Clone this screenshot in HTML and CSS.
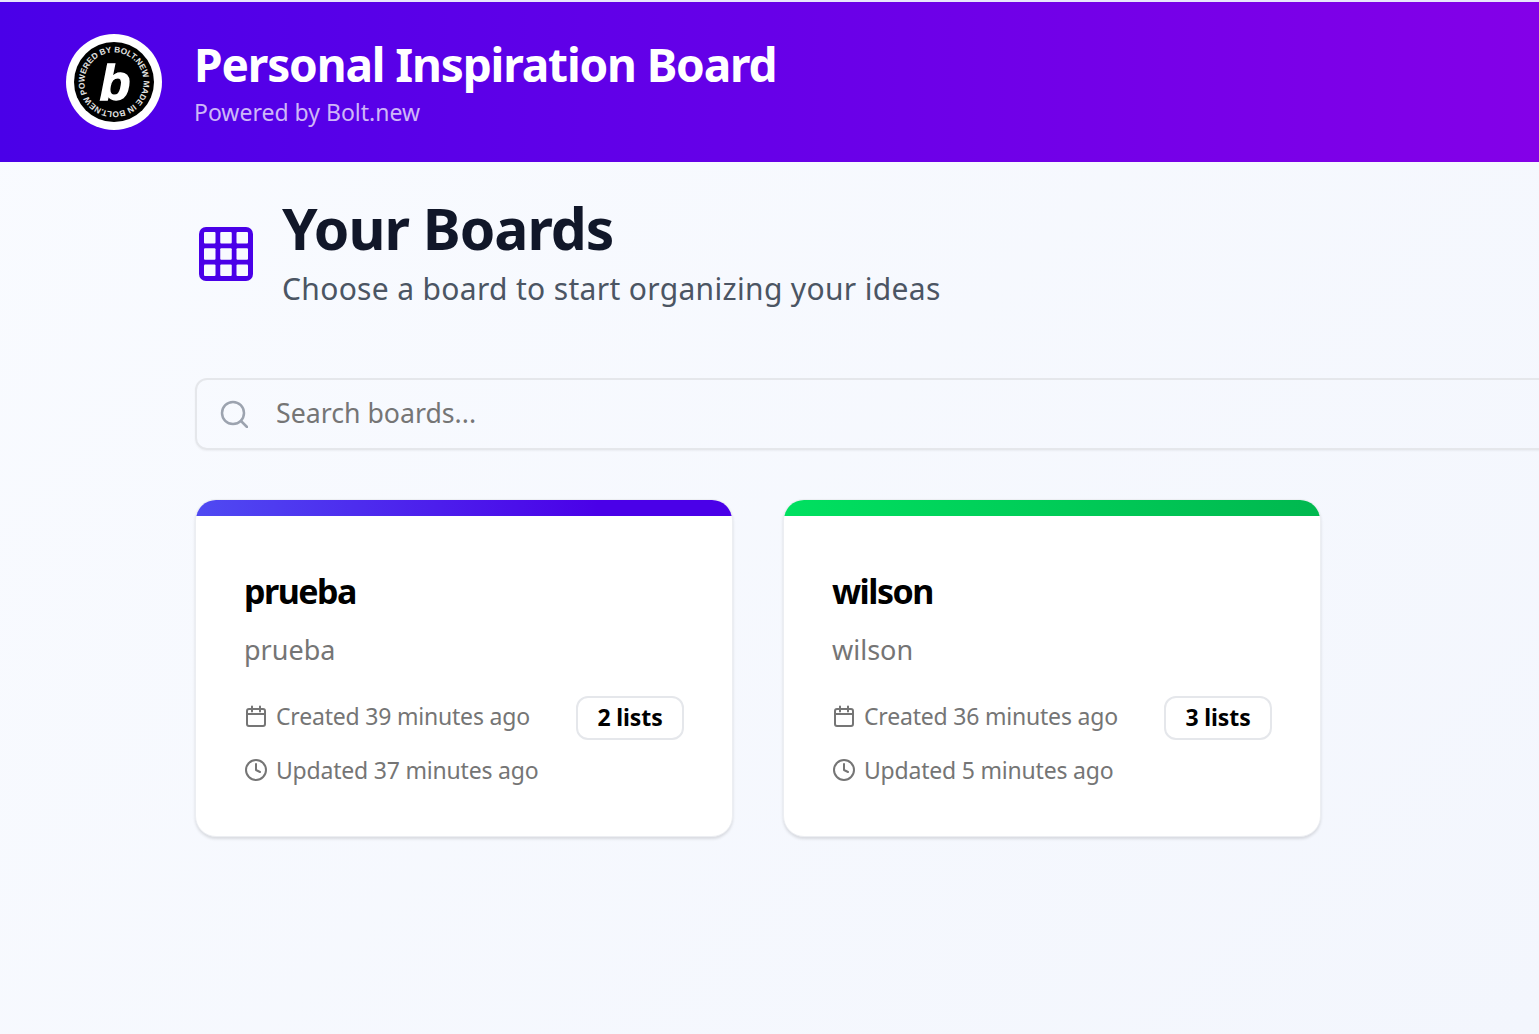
FILE: index.html
```html
<!DOCTYPE html>
<html lang="en">
<head>
<meta charset="utf-8">
<title>Personal Inspiration Board</title>
<link rel="stylesheet" href="styles.css">
</head>
<body>
<header class="topbar">
  <svg class="logo" viewBox="0 0 96 96" width="96" height="96" aria-hidden="true">
    <circle cx="48" cy="48" r="48" fill="#fff"></circle>
    <circle cx="48" cy="48" r="40" fill="#000"></circle>
    <defs><path id="ring" d="M18.500 48a29.500 29.500 0 1 1 59 0a29.500 29.500 0 1 1 -59 0"></path></defs>
    <text class="logo-ring" transform="rotate(-24 48 48)"><textPath href="#ring" textLength="183" lengthAdjust="spacing">POWERED BY BOLT.NEW MADE IN BOLT.NEW</textPath></text>
    <text class="logo-b" x="49" y="66" text-anchor="middle">b</text>
  </svg>
  <div class="brand">
    <h1 class="brand-title">Personal Inspiration Board</h1>
    <p class="brand-sub">Powered by Bolt.new</p>
  </div>
</header>
<main class="content">
  <section class="heading">
    <svg class="grid-icon" viewBox="0 0 54 54" width="54" height="54" aria-hidden="true">
      <rect class="grid-frame" x="0" y="0" width="54" height="54" rx="7"></rect>
      <rect class="grid-cell" x="5" y="5" width="11.500" height="11.500" rx="1"></rect>
      <rect class="grid-cell" x="21.250" y="5" width="11.500" height="11.500" rx="1"></rect>
      <rect class="grid-cell" x="37.500" y="5" width="11.500" height="11.500" rx="1"></rect>
      <rect class="grid-cell" x="5" y="21.250" width="11.500" height="11.500" rx="1"></rect>
      <rect class="grid-cell" x="21.250" y="21.250" width="11.500" height="11.500" rx="1"></rect>
      <rect class="grid-cell" x="37.500" y="21.250" width="11.500" height="11.500" rx="1"></rect>
      <rect class="grid-cell" x="5" y="37.500" width="11.500" height="11.500" rx="1"></rect>
      <rect class="grid-cell" x="21.250" y="37.500" width="11.500" height="11.500" rx="1"></rect>
      <rect class="grid-cell" x="37.500" y="37.500" width="11.500" height="11.500" rx="1"></rect>
    </svg>
    <div>
      <h2 class="heading-title">Your Boards</h2>
      <p class="heading-sub">Choose a board to start organizing your ideas</p>
    </div>
  </section>
  <div class="search">
    <svg class="search-icon" viewBox="0 0 28 28" width="28" height="28" aria-hidden="true">
      <circle cx="13" cy="13" r="11" fill="none" stroke="#9ca3af" stroke-width="2.500"></circle>
      <path d="M21 21l6 6" fill="none" stroke="#9ca3af" stroke-width="2.500" stroke-linecap="round"></path>
    </svg>
    <span class="search-text">Search boards...</span>
  </div>
  <div class="cards">
    <article class="card">
      <div class="card-bar bar-blue"></div>
      <div class="card-body">
        <h3 class="card-title">prueba</h3>
        <p class="card-desc">prueba</p>
        <div class="meta-row">
          <div class="meta meta-first">
            <svg class="meta-icon" viewBox="0 0 24 24" width="24" height="24" aria-hidden="true"><rect x="3" y="5" width="18" height="17" rx="2"></rect><path d="M16 2.500v5M8 2.500v5M3 10h18"></path></svg>
            <span>Created 39 minutes ago</span>
          </div>
          <span class="badge">2 lists</span>
        </div>
        <div class="meta meta-last">
          <svg class="meta-icon" viewBox="0 0 24 24" width="24" height="24" aria-hidden="true"><circle cx="12" cy="12" r="10"></circle><path d="M12 6v6l4 2"></path></svg>
          <span>Updated 37 minutes ago</span>
        </div>
      </div>
    </article>
    <article class="card">
      <div class="card-bar bar-green"></div>
      <div class="card-body">
        <h3 class="card-title">wilson</h3>
        <p class="card-desc">wilson</p>
        <div class="meta-row">
          <div class="meta meta-first">
            <svg class="meta-icon" viewBox="0 0 24 24" width="24" height="24" aria-hidden="true"><rect x="3" y="5" width="18" height="17" rx="2"></rect><path d="M16 2.500v5M8 2.500v5M3 10h18"></path></svg>
            <span>Created 36 minutes ago</span>
          </div>
          <span class="badge">3 lists</span>
        </div>
        <div class="meta meta-last">
          <svg class="meta-icon" viewBox="0 0 24 24" width="24" height="24" aria-hidden="true"><circle cx="12" cy="12" r="10"></circle><path d="M12 6v6l4 2"></path></svg>
          <span>Updated 5 minutes ago</span>
        </div>
      </div>
    </article>
  </div>
</main>
</body>
</html>
```
FILE: styles.css
```css
* { box-sizing: border-box; }
html, body { margin: 0; padding: 0; }
body {
  width: 1539px;
  height: 1034px;
  overflow: hidden;
  font-family: "Noto Sans", "Open Sans", sans-serif;
  background: linear-gradient(135deg, #f9fbff 0%, #f3f6fd 100%);
  border-top: 2px solid #e8e6fb;
}
.topbar {
  height: 160px;
  display: flex;
  align-items: center;
  gap: 32px;
  padding-left: 66px;
  background: linear-gradient(90deg, #4a00e8 0%, #8400e8 100%);
}
.logo { flex: none; }
.logo-ring { font: 700 8.300px "Liberation Sans", sans-serif; fill: #e4e4e4; }
.logo-b { font: italic 700 50px "Liberation Sans", sans-serif; fill: #fff; stroke: #fff; stroke-width: 1.400px; }
.brand { margin-bottom: 3px; }
.brand-title {
  margin: 0;
  font-size: 46px;
  line-height: 60px;
  font-weight: 700;
  letter-spacing: -1.150px;
  color: #fff;
}
.brand-sub {
  margin: 2px 0 0;
  font-size: 23px;
  line-height: 32px;
  color: rgba(255, 255, 255, .72);
}
.content { padding: 31px 0 0 195px; }
.heading { display: flex; align-items: center; gap: 29px; padding-left: 4px; }
.grid-icon { flex: none; margin-top: 5px; }
.grid-frame { fill: #4a00e8; }
.grid-cell { fill: #f8faff; }
.heading-title {
  margin: 0;
  font-size: 57px;
  line-height: 70px;
  font-weight: 700;
  letter-spacing: -1px;
  color: #111729;
}
.heading-sub {
  margin: 6px 0 0;
  font-size: 30px;
  line-height: 40px;
  letter-spacing: .33px;
  color: #4b5563;
}
.search {
  width: 1400px;
  height: 72px;
  margin-top: 69px;
  display: flex;
  align-items: center;
  gap: 28px;
  padding-left: 23px;
  border: 2px solid #e5e7eb;
  border-radius: 12px;
  box-shadow: 0 1px 2px rgba(0, 0, 0, .05);
}
.search-text { font-size: 26.700px; margin-top: -4px; color: #757575; }
.search-icon { flex: none; }
.cards { display: flex; gap: 50px; margin-top: 49px; }
.card {
  width: 538px;
  height: 338px;
  border-radius: 21px;
  background: #fff;
  border: 1px solid #eceef2;
  box-shadow: 0 2px 3px rgba(0, 0, 0, .12);
  overflow: hidden;
}
.card-bar { height: 16px; }
.bar-blue { background: linear-gradient(90deg, #4f4af2, #4a00e8 75%); }
.bar-green { background: linear-gradient(90deg, #00e060, #00b84f); }
.card-body { padding: 49px 48px 0; }
.card-title { margin: 0; font-size: 34px; line-height: 52px; font-weight: 700; letter-spacing: -1.500px; color: #000; }
.card-desc { margin: 13px 0 0; font-size: 27px; line-height: 40px; color: #757575; }
.meta-row { display: flex; justify-content: space-between; align-items: center; margin-top: 26px; height: 44px; }
.meta { display: flex; align-items: center; gap: 8px; font-size: 23px; line-height: 32px; letter-spacing: -.2px; color: #757575; }
.meta-first { margin-top: -4px; }
.meta-last { margin-top: 14px; }
.meta-icon { flex: none; fill: none; stroke: #757575; stroke-width: 2; stroke-linecap: round; stroke-linejoin: round; }
.badge {
  width: 108px;
  height: 44px;
  display: flex;
  align-items: center;
  justify-content: center;
  padding-bottom: 2px;
  border: 2px solid #e5e7eb;
  border-radius: 12px;
  font-size: 23px;
  font-weight: 700;
  letter-spacing: -.1px;
  color: #000;
}
```
